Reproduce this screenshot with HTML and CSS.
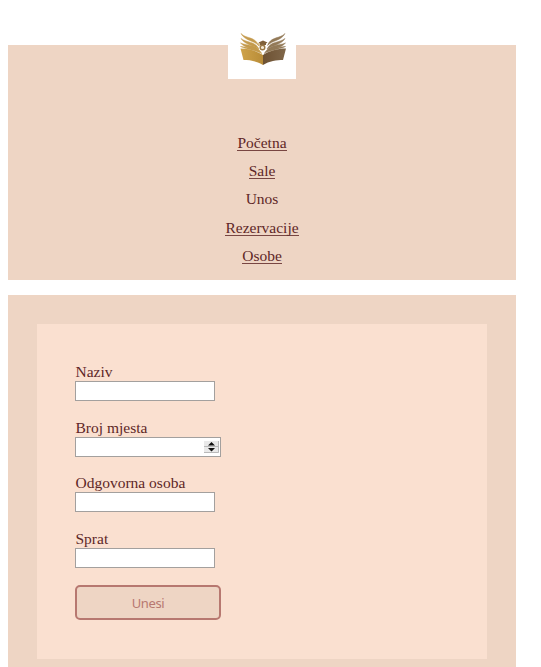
FILE: index.html
```html
<!DOCTYPE html>
<html lang="bs">
<head>
<meta charset="utf-8">
<title>Unos</title>
<link rel="stylesheet" href="styles.css">
</head>
<body>
<header class="header">
  <div class="logo">
    <svg width="68" height="67" viewBox="0 0 68 67">
      <defs>
        <linearGradient id="gold" x1="0" x2="1"><stop offset="0" stop-color="#cfa34a"/><stop offset="1" stop-color="#b88c38"/></linearGradient>
        <linearGradient id="brown" x1="0" x2="1"><stop offset="0" stop-color="#6d5132"/><stop offset="1" stop-color="#80674a"/></linearGradient>
      </defs>
      <path fill="url(#gold)" d="M12.500 36.500C21 36.500 29 39 35 43V53C29 49 22 48 15.500 48Z"/>
      <path fill="url(#brown)" d="M58 36.500C49 36.500 41 39 35 43V53C41 49 49 48 55 48Z"/>
      <g fill="#c49a4c" stroke="#c49a4c" stroke-width=".5">
        <path d="M13 21.500C18 27 27 24 30.500 33.500C25 28 17 29 13 21.500Z"/>
        <path d="M13 26.500C19 31 27 29 31 37C25 33 17 33 13 26.500Z"/>
        <path d="M12.500 31C20 34 28 32 32.500 40C26 36 18 37 12.500 31Z"/>
        <path d="M12.500 34.500C21 35.500 29 35.500 34 41.500C27 38 20 38 12.500 34.500Z"/>
      </g>
      <g fill="#927957" stroke="#927957" stroke-width=".5">
        <path d="M57 21.500C52 27 43 24 39.500 33.500C45 28 53 29 57 21.500Z"/>
        <path d="M57 26.500C51 31 43 29 39 37C45 33 53 33 57 26.500Z"/>
        <path d="M57.500 31C50 34 42 32 37.500 40C44 36 52 37 57.500 31Z"/>
        <path d="M57.500 34.500C49 35.500 41 35.500 36 41.500C43 38 50 38 57.500 34.500Z"/>
      </g>
      <path fill="#806039" d="M30.500 30.500L35 28.500L39.500 30.500L38 31.500V33H32V31.500Z"/>
      <circle cx="34.500" cy="35.500" r="2.300" fill="#f4ead8" stroke="#9a7845" stroke-width="1.400"/>
      <path d="M31 31V34" stroke="#b98b3c"/>
    </svg>
  </div>
  <nav class="nav">
    <a class="link" href="#">Početna</a>
    <a class="link" href="#">Sale</a>
    <span>Unos</span>
    <a class="link" href="#">Rezervacije</a>
    <a class="link" href="#">Osobe</a>
  </nav>
</header>
<main class="main">
  <form class="form">
    <label class="field">Naziv<input class="input" type="text"></label>
    <label class="field">Broj mjesta
      <span class="number">
        <input class="input wide" type="text" inputmode="numeric">
        <svg class="spinner" width="15" height="12" viewBox="0 0 15 12">
          <path fill="#e9e9e9" d="M0 0H15V12H0Z"/>
          <path fill="none" stroke="#b9b9b9" d="M0 11.500H14.500V0M0 5.500H15"/>
          <path fill="#111" d="M4 4.500L7.500 1L11 4.500ZM4 7L7.500 10.500L11 7Z"/>
        </svg>
      </span>
    </label>
    <label class="field">Odgovorna osoba<input class="input" type="text"></label>
    <label class="field">Sprat<input class="input" type="text"></label>
    <button class="submit" type="button">Unesi</button>
  </form>
</main>
</body>
</html>
```
FILE: styles.css
```css
* {
  box-sizing: border-box;
}

body {
  margin: 0;
  padding: 45px 25px 0 8px;
  height: 667px;
  overflow: hidden;
  background: #fff;
  color: #5e2727;
  font: 15.5px/18px "Liberation Serif", serif;
}

.header {
  height: 235px;
  margin-bottom: 15px;
  background: #eed5c4;
}

.logo {
  width: 68px;
  height: 67px;
  margin: 0 auto;
  transform: translateY(-33px);
  background: #fff;
}

.logo svg {
  display: block;
}

.nav {
  display: flex;
  flex-direction: column;
  align-items: center;
  padding-top: 22px;
}

.nav > * {
  height: 17px;
  margin-bottom: 11.2px;
}

.link {
  color: inherit;
  text-decoration: none;
  border-bottom: 1px solid #784642;
}

.main {
  height: 400px;
  padding: 29px;
  background: #eed5c4;
}

.form {
  height: 335px;
  padding: 39px 38px;
  background: #fae0d0;
}

.field {
  display: flex;
  flex-direction: column;
  align-items: flex-start;
  height: 55.6px;
  text-indent: 0.5px;
}

.input {
  display: block;
  flex: none;
  width: 140px;
  height: 20px;
  padding: 1px 3px;
  border: 1px solid #a3a09e;
  border-radius: 0;
  background: #fff;
  outline: none;
}

.wide {
  width: 146px;
}

.number {
  position: relative;
}

.spinner {
  position: absolute;
  top: 4px;
  right: 2px;
}

.submit {
  display: block;
  width: 146px;
  height: 35px;
  padding: 0;
  border: 2px solid #b77870;
  border-radius: 5px;
  background: #eed5c4;
  color: #b77870;
  font: 13px/20px "Noto Sans", sans-serif;
  letter-spacing: -0.4px;
}
```
